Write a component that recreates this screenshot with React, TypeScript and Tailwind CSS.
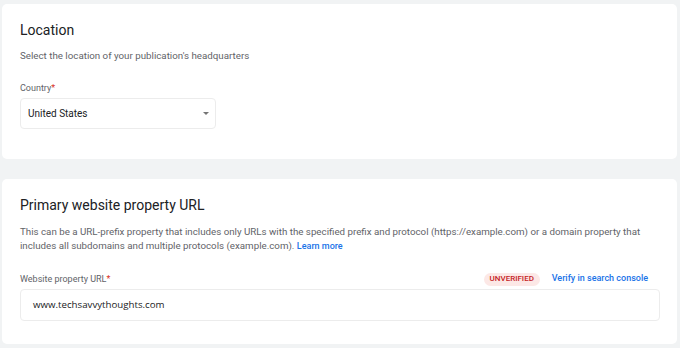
export default function App() {
  return (
    <div className="min-h-screen bg-[#f1f3f4] pl-[2px] pr-[3px] pt-1 font-['Roboto',sans-serif]">
      <section className="h-[155px] rounded-[5px] bg-white pl-[18px] pt-[16px]">
        <h2 className="text-[14px] leading-[20px] text-[#202124]">Location</h2>
        <p className="mt-[9px] text-[9.75px] leading-[14px] text-[#5f6368]">Select the location of your publication's headquarters</p>
        <label className="mt-[19px] block text-[9px] leading-[12px] text-[#5f6368]">
          Country<span className="text-[#d93025]">*</span>
        </label>
        <div className="mt-[4px] flex h-[31px] w-[196px] items-center justify-between rounded-[4px] border border-[#ececec] pl-[7px] pr-[6px]">
          <span className="text-[10px] text-[#202124]">United States</span>
          <svg width="6" height="3" viewBox="0 0 6 3">
            <path d="M0 0 L6 0 L3 3 Z" fill="#757575" />
          </svg>
        </div>
      </section>

      <section className="mt-[20px] h-[165px] rounded-[5px] bg-white pl-[18px] pr-[17px] pt-[16px]">
        <h2 className="text-[14px] leading-[20px] text-[#202124]">Primary website property URL</h2>
        <p className="mt-[10px] text-[9.75px] leading-[14px] text-[#5f6368]">
          This can be a URL-prefix property that includes only URLs with the specified prefix and protocol (https://example.com) or a domain property that
          <br />
          includes all subdomains and multiple protocols (example.com).{" "}
          <a className="text-[9px] font-medium text-[#1a73e8]">Learn more</a>
        </p>
        <div className="mt-[19px] flex h-[14px] items-center justify-between">
          <label className="text-[9px] leading-[12px] text-[#5f6368]">
            Website property URL<span className="text-[#d93025]">*</span>
          </label>
          <div className="flex items-center gap-[12px] pr-[12px]">
            <span className="flex h-[13px] w-[56px] items-center justify-center rounded-full bg-[#fce8e6] text-[8px] font-medium text-[#c5221f]">
              UNVERIFIED
            </span>
            <a className="text-[9px] font-medium text-[#1a73e8]">Verify in search console</a>
          </div>
        </div>
        <div className="mt-[3px] flex h-[32px] items-center rounded-[4px] border border-[#ececec] pl-[12px]">
          <span className="font-['Open_Sans',sans-serif] text-[9.7px] text-[#202124]">www.techsavvythoughts.com</span>
        </div>
      </section>
    </div>
  );
}
